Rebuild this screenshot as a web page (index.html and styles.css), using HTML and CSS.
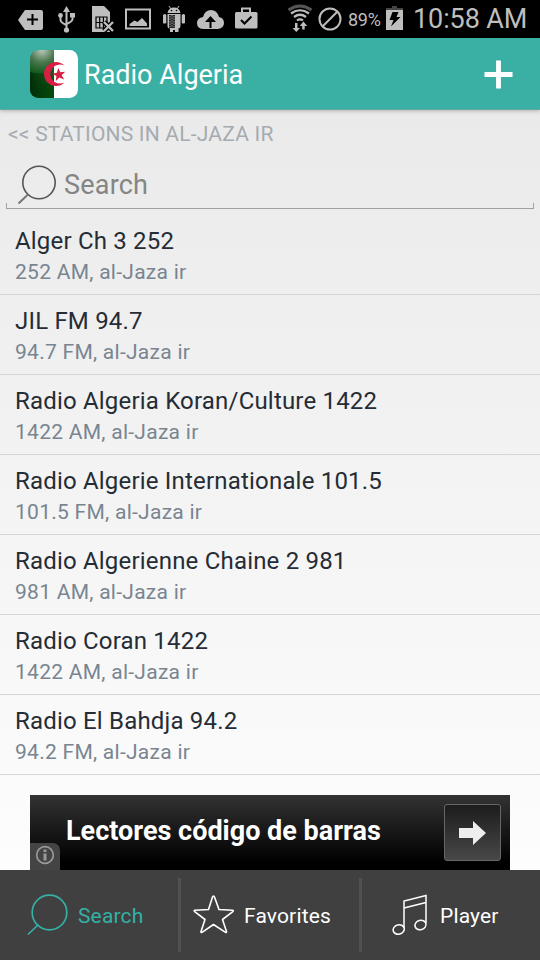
FILE: index.html
```html
<!DOCTYPE html>
<html lang="en">
<head>
    <meta charset="UTF-8">
    <meta name="viewport" content="width=device-width, initial-scale=1.0">
    <title>Radio Algeria</title>
    <link rel="stylesheet" href="styles.css">
</head>
<body>
    <div class="status-bar">
        <div class="notifications">
            <svg viewBox="0 0 36 38"><path fill="#bebebe" d="M13 10h16q2 0 2 2v16q0 2-2 2H13L6 20z"/><path stroke="#000" stroke-width="2" d="M15 19.500h11M20.500 14v11"/></svg>
            <svg viewBox="0 0 36 38" fill="none" stroke="#bebebe" stroke-width="2"><path d="M18.500 10v20M12.500 16v4q0 2.500 6 5M24.500 16v3q0 2.500-6 5"/><circle cx="18.500" cy="30" r="2.600" fill="#bebebe" stroke="none"/><circle cx="12.500" cy="15.500" r="2.400" fill="#bebebe" stroke="none"/><path fill="#bebebe" stroke="none" d="M15 12l3.500-6 3.500 6zM22 13h5v4.500h-5z"/></svg>
            <svg viewBox="0 0 36 38"><path fill="#bebebe" d="M8 6h12l6 6v20H8z"/><path fill="none" stroke="#000" stroke-width="1.200" d="M12 17h11v11H12zM15.700 17v11M19.400 17v11M12 22.500h11"/><path stroke="#000" stroke-width="5" d="m20 22 9 9m0-9-9 9"/><path stroke="#bebebe" stroke-width="2.400" d="m20 22 9 9m0-9-9 9"/></svg>
            <svg viewBox="0 0 36 38"><path fill="none" stroke="#bebebe" stroke-width="2" d="M6 9.500h24v19H6z"/><path fill="#bebebe" d="M9.500 26v-2l5-3.500 3 1.500 4.500-4 5 5.500V26z"/></svg>
            <svg viewBox="0 0 36 38"><path stroke="#bebebe" d="m13 6 2 3m8-3-2 3"/><path fill="#bebebe" d="M11.500 13q1-5.500 6.500-5.500t6.500 5.500zM11.500 14h13v12q0 2-2 2.500V32h-3.500v-2H17v2h-3v-3.500q-2.500 0-2.500-2.500zM7 15q2-2 3.300 0v8q-2 1-3.300 0zM25.700 15q2-2 3.300 0v8q-2 1-3.300 0z"/><path fill="#222" d="M13 15h6v13h-6z"/><path fill="none" stroke="#999" stroke-dasharray="1.500 1" d="M14 16v11M16 15v12M18 16v11"/><circle cx="15.500" cy="10.500" r=".8"/><circle cx="20.500" cy="10.500" r=".8"/></svg>
            <svg viewBox="0 0 36 38"><path fill="#bebebe" d="M12 29q-7 0-7-6 0-5 6-6 2-7 8-7t8 7q5 1 5 6t-6 6z"/><path fill="#000" d="m18.500 16 5.500 6h-4.500v6h-2v-6H13z"/></svg>
            <svg viewBox="0 0 36 38"><path fill="none" stroke="#bebebe" stroke-width="2" d="M14 13V8.500h8V13"/><rect x="7" y="12" width="22.500" height="16.500" rx="1.500" fill="#bebebe"/><path fill="none" stroke="#000" stroke-width="2" d="m13 20 3.500 3.500 7-7"/></svg>
        </div>
        <div class="system">
            <svg class="wifi" viewBox="0 0 26 32"><path fill="none" stroke="#555" stroke-width="3" d="M1.500 7Q13-1 24.500 7"/><path fill="none" stroke="#bebebe" stroke-width="2.200" d="M4 10.500q9-6.500 18 0M7 14q6-4.500 12 0M10 17.500q3-2.300 6 0"/><path fill="#bebebe" d="M8 20h2.500v5H13l-3.700 4-3.800-4H8zM15.200 26.500V23H12.700l3.700-4.500 3.800 4.500h-2.500v3.500z"/></svg>
            <svg class="blocked" viewBox="0 0 24 24" fill="none" stroke="#bebebe" stroke-width="2"><circle cx="12" cy="12" r="10.500"/><path d="M4.500 19.500l15-15"/></svg>
            <span class="percent">89%</span>
            <svg class="battery" viewBox="0 0 17 24"><path fill="#444" d="M6 0h5v2H6zM0 2h17v5H0z"/><path fill="#bebebe" d="M0 4h17v20H0z"/><path fill="#000" d="M6.500 6h6l-2 5h4L5 20.500 7.500 14H3.500z"/></svg>
            <span class="time">10:58 AM</span>
        </div>
    </div>

    <div class="header">
        <svg class="logo" viewBox="0 0 48 48">
            <defs>
                <clipPath id="round"><rect width="48" height="48" rx="8.500"/></clipPath>
                <radialGradient id="green" cx="12" cy="0" r="36" gradientUnits="userSpaceOnUse">
                    <stop offset="0" stop-color="#b9c8b8"/>
                    <stop offset=".35" stop-color="#4a774e"/>
                    <stop offset=".65" stop-color="#135a1e"/>
                    <stop offset="1" stop-color="#06480d"/>
                </radialGradient>
                <linearGradient id="shade"><stop offset="0" stop-color="#001f04" stop-opacity=".7"/><stop offset="1" stop-color="#003b08" stop-opacity="0"/></linearGradient>
            </defs>
            <g clip-path="url(#round)">
                <path fill="#fff" d="M24 0h24v48H24z"/>
                <path fill="url(#green)" d="M0 0h24v48H0z"/>
                <path fill="url(#shade)" d="M0 22q12 4 24-2v28H0z"/>
                <path fill="#d81e42" d="M34.500 15.500a12 12 0 1 0 0 17 9.600 9.600 0 1 1 0-17z"/>
                <path fill="#d81e42" d="m28.300 18 2 4.200 5-.4-3.700 3.200 2.500 4.500-4.700-2-3.600 3.400.6-4.900-4.400-2.300 4.800-1z"/>
            </g>
        </svg>
        <h1>Radio Algeria</h1>
        <svg class="add" viewBox="0 0 30 30"><path stroke="#fff" stroke-width="5" d="M.5 15h29M15 .5v29"/></svg>
    </div>

    <div class="content">
        <div class="back">&lt;&lt; STATIONS IN AL-JAZA IR</div>
        <div class="search-box">
            <svg viewBox="0 0 40 40" fill="none" stroke="#555" stroke-width="1.600"><circle cx="22" cy="17.500" r="16.200"/><path stroke="#777" stroke-width="2" d="M11 29.500 1.500 38.500"/></svg>
            <span>Search</span>
        </div>
        <div class="stations">
            <div class="station"><h2>Alger Ch 3 252</h2><p>252 AM, al-Jaza ir</p></div>
            <div class="station"><h2>JIL FM 94.7</h2><p>94.7 FM, al-Jaza ir</p></div>
            <div class="station"><h2>Radio Algeria Koran/Culture 1422</h2><p>1422 AM, al-Jaza ir</p></div>
            <div class="station"><h2>Radio Algerie Internationale 101.5</h2><p>101.5 FM, al-Jaza ir</p></div>
            <div class="station"><h2>Radio Algerienne Chaine 2 981</h2><p>981 AM, al-Jaza ir</p></div>
            <div class="station"><h2>Radio Coran 1422</h2><p>1422 AM, al-Jaza ir</p></div>
            <div class="station"><h2>Radio El Bahdja 94.2</h2><p>94.2 FM, al-Jaza ir</p></div>
        </div>
        <div class="ad">
            <span class="ad-text">Lectores código de barras</span>
            <div class="ad-button">
                <svg viewBox="0 0 28 24"><path fill="#eee" d="M0 7h14V0l13 12-13 12v-7H0z"/></svg>
            </div>
            <div class="ad-info">
                <svg viewBox="0 0 20 20"><circle cx="10" cy="10" r="8.300" fill="none" stroke="#999" stroke-width="1.700"/><path fill="#999" d="M8.500 4.500h3v2.500h-3zM8.500 8.500h3v7h-3z"/></svg>
            </div>
        </div>
    </div>

    <div class="tabs">
        <div class="tab tab-search active">
            <svg viewBox="0 0 42 42" fill="none" stroke="#35b0a5" stroke-width="1.700"><circle cx="22.500" cy="18.500" r="17.300"/><path d="M11.500 30.500 1 40.500"/></svg>
            <span>Search</span>
        </div>
        <div class="tab tab-favorites">
            <svg viewBox="0 0 42 42" fill="none" stroke="#fff" stroke-width="1.600" stroke-linejoin="round"><path d="M20.500 2q.7 0 1 1L26 15.500l13.500.8q1.500.2.300 1.300L29.500 25.500l4 12q.3 1.500-1 .8L20.500 30.500 9 38.300q-1.300.7-1-.8l4-12-10.300-7.900Q.5 16.500 2 16.300l13.500-.8L19.500 3q.3-1 1-1z"/></svg>
            <span>Favorites</span>
        </div>
        <div class="tab tab-player">
            <svg viewBox="0 0 36 42" fill="none" stroke="#fff" stroke-width="1.500"><path d="M12 34V7l22-5.500V29M12 14l22-5.500"/><ellipse cx="6.700" cy="35.500" rx="5.600" ry="4.700" transform="rotate(-15 6.700 35.500)"/><ellipse cx="28.500" cy="31" rx="5.600" ry="4.700" transform="rotate(-15 28.500 31)"/></svg>
            <span>Player</span>
        </div>
    </div>
</body>
</html>
```
FILE: styles.css
```css
* {
    box-sizing: border-box;
}
body {
    font-family: Roboto, Arial, sans-serif;
    margin: 0;
    width: 540px;
    height: 960px;
    overflow: hidden;
    display: flex;
    flex-direction: column;
}
h1, h2, p {
    margin: 0;
    font-weight: normal;
}
svg {
    display: block;
    flex: none;
}
.status-bar {
    height: 38px;
    background-color: #000;
    color: #bebebe;
    display: flex;
    justify-content: space-between;
    padding: 0 13px 0 12px;
}
.notifications {
    display: flex;
}
.notifications svg {
    width: 36px;
    height: 38px;
}
.system {
    display: flex;
    align-items: center;
}
.wifi {
    width: 26px;
    height: 32px;
    margin-right: 5px;
}
.blocked {
    width: 24px;
    height: 24px;
    margin-right: 6px;
    margin-bottom: 1px;
}
.percent {
    width: 38px;
    font-size: 18px;
    letter-spacing: -0.3px;
    padding-top: 1px;
}
.battery {
    width: 17px;
    height: 24px;
    margin-right: 10px;
    margin-bottom: 2px;
}
.time {
    width: 114px;
    font-size: 27px;
    letter-spacing: -0.1px;
    white-space: nowrap;
}
.header {
    height: 72px;
    background-color: #3ab0a5;
    border-bottom: 1px solid #64a9a2;
    color: #fff;
    display: flex;
    align-items: center;
    padding: 1px 27px 0 30px;
    position: relative;
    box-shadow: 0 1px 4px rgba(0, 0, 0, 0.25);
}
.logo {
    width: 48px;
    height: 48px;
}
.header h1 {
    font-size: 27px;
    margin-left: 6px;
    padding-top: 1px;
    flex: 1;
}
.add {
    width: 29px;
    height: 29px;
}
.content {
    height: 760px;
    background: linear-gradient(#eaeaea, #fdfdfd);
}
.back {
    height: 48px;
    line-height: 48px;
    padding-left: 8px;
    font-size: 21px;
    letter-spacing: 0.2px;
    color: #a5abb0;
}
.search-box {
    height: 51px;
    margin: 0 6px;
    padding: 2px 0 0 11px;
    display: flex;
    align-items: center;
    font-size: 27px;
    letter-spacing: 0.2px;
    color: #858585;
    background:
        linear-gradient(#a0a0a0, #a0a0a0) left bottom / 1px 6px no-repeat,
        linear-gradient(#a0a0a0, #a0a0a0) right bottom / 1px 6px no-repeat,
        linear-gradient(#a0a0a0, #a0a0a0) left bottom / 100% 1px no-repeat;
}
.search-box svg {
    width: 40px;
    height: 40px;
    margin-right: 7px;
}
.search-box span {
    padding-top: 1px;
}
.stations {
    padding-top: 6px;
}
.station {
    height: 80px;
    padding: 10px 15px 0;
    border-bottom: 1px solid #d5d6d7;
    white-space: nowrap;
}
.station h2 {
    font-size: 24px;
    line-height: 32px;
    letter-spacing: 0.19px;
    color: #252c35;
}
.station p {
    font-size: 21px;
    line-height: 30px;
    letter-spacing: 0.27px;
    color: #788591;
}
.ad {
    position: relative;
    width: 480px;
    height: 75px;
    margin: 20px auto 0;
    padding: 0 9px 0 36px;
    display: flex;
    align-items: center;
    justify-content: space-between;
    background: linear-gradient(#333, #000 90%);
}
.ad-text {
    font-size: 27px;
    font-weight: bold;
    color: #fff;
    white-space: nowrap;
    padding-bottom: 4px;
}
.ad-button {
    width: 57px;
    height: 57px;
    border: 1px solid #666;
    border-radius: 3px;
    background: linear-gradient(#1c1c1c, #484848);
    display: flex;
    align-items: center;
    justify-content: center;
}
.ad-button svg {
    width: 28px;
    height: 24px;
}
.ad-info {
    position: absolute;
    left: 0;
    bottom: 0;
    width: 30px;
    height: 27px;
    padding: 2px 0 0 5px;
    border-top-right-radius: 7px;
    background-color: #444;
}
.ad-info svg {
    width: 20px;
    height: 20px;
}
.tabs {
    height: 90px;
    background-color: #404040;
    color: #fff;
    display: grid;
    grid-template-columns: 181px 181px 178px;
}
.tab {
    display: flex;
    align-items: center;
    font-size: 21px;
    letter-spacing: 0.15px;
    background: linear-gradient(#515151, #515151) right 8px / 3px 74px no-repeat;
}
.tab span {
    padding-top: 2px;
}
.tab svg {
    width: 42px;
    height: 42px;
}
.active {
    color: #35b0a5;
}
.tab-search {
    padding-left: 27px;
}
.tab-search span {
    margin-left: 9px;
}
.tab-favorites {
    padding-left: 12px;
}
.tab-favorites span {
    margin-left: 9px;
}
.tab-player {
    padding-left: 30px;
    background: none;
}
.tab-player svg {
    width: 36px;
}
.tab-player span {
    margin-left: 12px;
}
```
